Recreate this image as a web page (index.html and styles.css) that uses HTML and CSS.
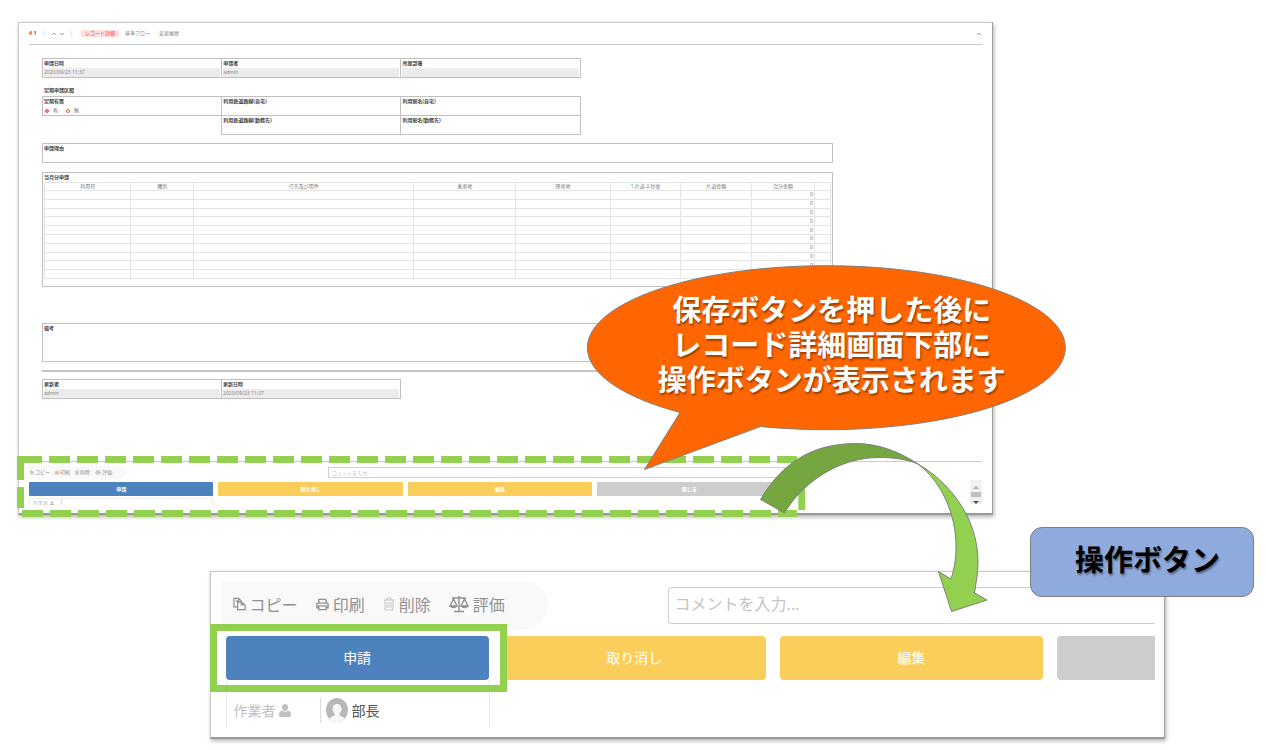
FILE: index.html
```html
<!DOCTYPE html>
<html lang="ja">
<head>
    <meta charset="UTF-8">
    <meta name="viewport" content="width=device-width, initial-scale=1.0">
    <title>操作ボタン</title>
    <link rel="stylesheet" href="styles.css">
</head>
<body>
    <svg class="sprite" aria-hidden="true">
        <symbol id="icon-copy" viewBox="0 0 14 14">
            <path d="M5 10H1V1h5l3 3v1M6 1v3H3M5 5h4l4 3v5H5zM9 5v3h4" fill="none" stroke="currentColor" stroke-width="1.3"/>
        </symbol>
        <symbol id="icon-print" viewBox="0 0 14 14">
            <path d="M3 6V2h7l1 1v3M3 11H1V7q0-1 1-1h10q1 0 1 1v4h-2M3 9h8v4H3z" fill="none" stroke="currentColor" stroke-width="1.5"/>
        </symbol>
        <symbol id="icon-trash" viewBox="0 0 12 14">
            <path d="M1 3h10M4 3V1h4v2M2 3v10h8V3M4 5v6M6 5v6M8 5v6" fill="none" stroke="currentColor"/>
        </symbol>
        <symbol id="icon-scale" viewBox="0 0 20 18">
            <path d="M3 3h14M10 1v15M5 16.500h10M4.500 4L1 11h7zM15.500 4L12 11h7zM1 11q3.500 3 7 0M12 11q3.500 3 7 0" fill="none" stroke="currentColor" stroke-width="1.400"/>
        </symbol>
        <symbol id="icon-user" viewBox="0 0 12 13">
            <path d="M6 0a3 3 0 0 1 3 3.500C9 5.500 7.700 7 6 7S3 5.500 3 3.500A3 3 0 0 1 6 0zM3 6.500c2 1.600 4 1.600 6 0 2 .3 3 2 3 4.500 0 1.300-.8 2-2 2H2c-1.200 0-2-.7-2-2 0-2.500 1-4.200 3-4.500z" fill="currentColor"/>
        </symbol>
    </svg>

    <main class="stage">
        <section class="panel record">
            <header class="record-header">
                <span class="record-no"><b>#</b> 1</span>
                <span>|</span>
                <svg class="chevrons" viewBox="0 0 13 4"><path d="M1 3l2-2 2 2M9 1l2 2 2-2" fill="none" stroke="currentColor"/></svg>
                <span>|</span>
                <nav class="tabs">
                    <a href="#" class="active">レコード詳細</a>
                    <a href="#">基準フロー</a>
                    <a href="#">変更履歴</a>
                </nav>
                <svg class="collapse" viewBox="0 0 5 4"><path d="M0 3l2-2 2 2" fill="none" stroke="currentColor"/></svg>
            </header>

            <form class="form">
                <div class="fields three">
                    <div class="field"><b>申請日時</b><span class="readonly">2020/09/23 11:37</span></div>
                    <div class="field"><b>申請者</b><span class="readonly">admin</span></div>
                    <div class="field"><b>所属部署</b><span class="readonly"></span></div>
                </div>

                <h2 class="group-title">定期申請区間</h2>
                <div class="fields three">
                    <div class="field">
                        <b>定期有無</b>
                        <span class="radios">
                            <label><input type="radio" name="pass" checked> 有</label>
                            <label><input type="radio" name="pass"> 無</label>
                        </span>
                    </div>
                    <div class="field"><label for="line1">利用鉄道路線(自宅)</label><input id="line1" type="text"></div>
                    <div class="field"><label for="station1">利用駅名(自宅)</label><input id="station1" type="text"></div>
                    <div class="field second"><label for="line2">利用鉄道路線(勤務先)</label><input id="line2" type="text"></div>
                    <div class="field"><label for="station2">利用駅名(勤務先)</label><input id="station2" type="text"></div>
                </div>

                <div class="box reason"><label for="reason">申請理由</label><textarea id="reason"></textarea></div>

                <div class="box monthly">
                    <b>当月分申請</b>
                    <table>
                        <colgroup>
                            <col class="c-date"><col class="c-kind"><col class="c-place"><col class="c-from"><col class="c-to">
                            <col class="c-fare"><col class="c-fare"><col class="c-sum"><col class="c-end">
                        </colgroup>
                        <thead>
                            <tr><th>利用日</th><th>種別</th><th>行先及び用件</th><th>乗車地</th><th>降車地</th><th>1.片道 2.往復</th><th>片道金額</th><th>合計金額</th><th></th></tr>
                        </thead>
                        <tbody>
                            <tr><td></td><td></td><td></td><td></td><td></td><td></td><td></td><td>0</td><td></td></tr>
                            <tr><td></td><td></td><td></td><td></td><td></td><td></td><td></td><td>0</td><td></td></tr>
                            <tr><td></td><td></td><td></td><td></td><td></td><td></td><td></td><td>0</td><td></td></tr>
                            <tr><td></td><td></td><td></td><td></td><td></td><td></td><td></td><td>0</td><td></td></tr>
                            <tr><td></td><td></td><td></td><td></td><td></td><td></td><td></td><td>0</td><td></td></tr>
                            <tr><td></td><td></td><td></td><td></td><td></td><td></td><td></td><td>0</td><td></td></tr>
                            <tr><td></td><td></td><td></td><td></td><td></td><td></td><td></td><td>0</td><td></td></tr>
                            <tr><td></td><td></td><td></td><td></td><td></td><td></td><td></td><td>0</td><td></td></tr>
                            <tr><td></td><td></td><td></td><td></td><td></td><td></td><td></td><td>0</td><td></td></tr>
                            <tr><td></td><td></td><td></td><td></td><td></td><td></td><td></td><td>0</td><td></td></tr>
                        </tbody>
                    </table>
                </div>

                <div class="box note"><label for="note">備考</label><textarea id="note"></textarea></div>
                <hr>
                <div class="fields two">
                    <div class="field"><b>更新者</b><span class="readonly">admin</span></div>
                    <div class="field"><b>更新日時</b><span class="readonly">2020/09/23 11:37</span></div>
                </div>
            </form>

            <footer class="record-footer">
                <div class="bar">
                    <div class="tools">
                        <a href="#"><svg><use href="#icon-copy"/></svg>コピー</a>
                        <a href="#"><svg><use href="#icon-print"/></svg>印刷</a>
                        <a href="#"><svg><use href="#icon-trash"/></svg>削除</a>
                        <a href="#"><svg class="scale"><use href="#icon-scale"/></svg>評価</a>
                    </div>
                    <input class="comment" type="text" placeholder="コメントを入力..." aria-label="コメント">
                </div>
                <div class="actions">
                    <button type="button" class="apply">申請</button>
                    <button type="button" class="warn">取り消し</button>
                    <button type="button" class="warn">編集</button>
                    <button type="button" class="close">閉じる</button>
                </div>
                <div class="worker-cut">作業者 <svg><use href="#icon-user"/></svg><i></i></div>
                <div class="scroller">
                    <svg viewBox="0 0 12 24"><path d="M3 9l3-3 3 3z" fill="#aaa"/><path d="M1 12h10v5H1z" fill="#c1c1c1"/><path d="M3 21h6l-3 3z" fill="#505050"/></svg>
                </div>
                <svg class="dashes">
                    <line x1="0" y1="3.500" x2="25" y2="3.500"/>
                    <line x1="32" y1="3.500" x2="99%" y2="3.500" stroke-dasharray="21 7"/>
                    <line x1="5" y1="57.500" x2="99%" y2="57.500" stroke-dasharray="21 7"/>
                    <line x1="3.500" y1="2" x2="3.500" y2="52" stroke-dasharray="22 7"/>
                    <line x1="100%" y1="5" x2="100%" y2="54" stroke-dasharray="21 7" class="right"/>
                </svg>
            </footer>
        </section>

        <section class="panel detail">
            <div class="bar">
                <div class="tools">
                    <a href="#"><svg><use href="#icon-copy"/></svg>コピー</a>
                    <a href="#"><svg><use href="#icon-print"/></svg>印刷</a>
                    <a href="#"><svg class="trash"><use href="#icon-trash"/></svg>削除</a>
                    <a href="#"><svg class="scale"><use href="#icon-scale"/></svg>評価</a>
                </div>
                <input class="comment" type="text" placeholder="コメントを入力..." aria-label="コメント">
            </div>
            <div class="actions">
                <div class="framed"><button type="button" class="apply">申請</button></div>
                <button type="button" class="warn">取り消し</button>
                <button type="button" class="warn">編集</button>
                <button type="button" class="close" aria-label="閉じる"></button>
            </div>
            <div class="worker">
                <span class="worker-label">作業者 <svg><use href="#icon-user"/></svg></span>
                <span class="worker-name">
                    <svg viewBox="0 0 22 24"><ellipse cx="11" cy="12" rx="11" ry="12" fill="#b8b8b8"/><path d="M11 6c3 0 4.500 2 4.500 5 0 2-1 3.500-2 4.500v2c2 .5 4 1.500 5 3-4 4.500-11 4.500-15 0 1-1.500 3-2.500 5-3v-2c-1-1-2-2.500-2-4.500 0-3 1.500-5 4.500-5z" fill="#f7f7f7"/></svg>
                    部長
                </span>
            </div>
        </section>

        <div class="callout">
            <svg viewBox="0 0 482 208"><path d="M93 148.500A239 82 0 1 1 173.500 162.500L57.500 205.500z"/></svg>
            <p>保存ボタンを押した後に<br>レコード詳細画面下部に<br>操作ボタンが表示されます</p>
        </div>

        <svg class="arrow" viewBox="0 0 230 172">
            <path class="light" d="M159 23C187 39 219 74 219 121C219 132 217 142 215.500 152L228 159L192.500 170.500L179.500 130.500L192 138C196 126 197 115 197 105C197 74 183 41 159 23z"/>
            <path class="dark" d="M1.500 58.500C25 18 58 2.500 97 2.500C122 2.500 144 13 159 23C147 18 134 16.500 120 16.500C80 16.500 44 41 25.500 72z"/>
        </svg>

        <div class="badge">操作ボタン</div>
    </main>
</body>
</html>
```

FILE: styles.css
```css
* {
    box-sizing: border-box;
}
body {
    margin: 0;
    background-color: #fff;
    color: #555;
    font-family: "Noto Sans", "Noto Sans CJK JP", sans-serif;
}
button,
input,
textarea {
    font: inherit;
    color: inherit;
    margin: 0;
    padding: 0;
    border: 0;
    background: none;
    min-width: 0;
}
a {
    color: inherit;
    text-decoration: none;
}
.sprite {
    position: absolute;
    width: 0;
    height: 0;
}
.stage {
    position: relative;
    padding: 22px 0 11px 18px;
}
.panel {
    background-color: #fff;
    border: 1px solid #c8c8c8;
    border-right-color: #a0a0a0;
    border-bottom: 2px solid #999;
    box-shadow: 1px 2px 4px rgba(0, 0, 0, 0.3);
}

/* record screen */
.record {
    width: 76.800%;
    padding: 0 10px 8px;
    font-size: 5px;
    line-height: 9px;
}
.record-header {
    display: flex;
    align-items: center;
    gap: 6px;
    height: 22px;
    border-bottom: 1px solid #ccc;
    color: #aaa;
}
.record-no {
    color: #555;
    font-weight: bold;
}
.record-no b {
    color: #f0544f;
}
.chevrons {
    width: 13px;
    height: 4px;
}
.tabs {
    display: flex;
    gap: 3px;
    margin-left: 2px;
    color: #888;
}
.tabs a {
    line-height: 7px;
    padding: 0 3px;
}
.tabs .active {
    background-color: #fddfdd;
    color: #f0544f;
    padding: 0 4px;
}
.collapse {
    width: 5px;
    height: 4px;
    margin-left: auto;
}
.form {
    width: 83%;
    margin: 13px 0 0 13px;
}
.fields {
    display: grid;
}
.three {
    width: 68%;
    grid-template-columns: repeat(3, 1fr);
}
.two {
    width: 45.300%;
    grid-template-columns: repeat(2, 1fr);
}
.field {
    display: flex;
    flex-direction: column;
    height: 20px;
    margin: 0 -1px -1px 0;
    padding: 0 1px;
    border: 1px solid #c0c0c0;
}
.field b,
.field > label,
.box b,
.box label {
    color: #444;
    font-weight: bold;
}
.field input[type="text"] {
    height: 9px;
}
.second {
    grid-column-start: 2;
}
.readonly {
    height: 9px;
    background-color: #ececec;
    color: #888;
}
.radios {
    display: flex;
    gap: 8px;
    padding-left: 1px;
}
.radios label {
    display: flex;
    align-items: center;
    gap: 4px;
}
.radios input {
    appearance: none;
    width: 4px;
    height: 4px;
    border: 1px solid #f0544f;
    border-radius: 50%;
}
.radios input:checked {
    background-color: #f58b87;
}
.group-title {
    margin: 9px 0 1px 2px;
    font-size: 5px;
    line-height: 9px;
    color: #444;
}
.box {
    display: flex;
    flex-direction: column;
    padding: 0 1px;
    border: 1px solid #c0c0c0;
}
.box textarea {
    flex: 1;
    width: 100%;
    min-height: 0;
    resize: none;
}
.reason {
    height: 20px;
    margin-top: 9px;
}
.monthly {
    height: 115px;
    margin-top: 9px;
}
.note {
    height: 39px;
    margin-top: 36px;
}
.form hr {
    height: 2px;
    margin: 8px 0 7px;
    border: 0;
    background-color: #c4c4c4;
}
.monthly table {
    width: 100%;
    height: 97px;
    table-layout: fixed;
    border-collapse: collapse;
    line-height: 7px;
}
.monthly th,
.monthly td {
    padding: 0;
    border: 1px solid #e4e4e4;
    font-weight: normal;
    color: #777;
}
.monthly td {
    padding-right: 1px;
    text-align: right;
}
.c-date { width: 11%; }
.c-kind { width: 8%; }
.c-place { width: 28%; }
.c-from { width: 13%; }
.c-to { width: 12%; }
.c-fare { width: 9%; }
.c-sum { width: 8%; }
.c-end { width: 2%; }

/* tool bar and operation buttons */
.bar {
    display: flex;
    align-items: center;
}
.tools {
    display: flex;
    align-items: center;
    background-color: #f9f9f9;
    color: #909090;
}
.tools a {
    display: flex;
    align-items: center;
}
.comment {
    border: 1px solid #d0d0d0;
}
.comment::placeholder {
    color: #c4c4c4;
    opacity: 1;
}
.actions {
    display: grid;
}
.actions button {
    width: 100%;
    color: #fff;
}
.actions .apply {
    background-color: #4d82be;
}
.actions .warn {
    background-color: #fbce5b;
}
.actions .close {
    background-color: #cdcdcd;
}

.record-footer {
    position: relative;
    margin-top: 63px;
    padding-top: 4px;
    border-top: 1px solid #ccc;
}
.record-footer .tools {
    gap: 5px;
    width: 97px;
    height: 13px;
    padding-left: 1px;
    border-radius: 0 7px 7px 0;
}
.record-footer .tools a {
    gap: 1px;
}
.record-footer .tools svg {
    width: 4px;
    height: 5px;
}
.record-footer .tools .scale {
    width: 6px;
}
.record-footer .comment {
    width: 48%;
    height: 11px;
    margin-left: 202px;
    padding-left: 3px;
}
.record-footer .actions {
    width: 79%;
    grid-template-columns: repeat(4, 1fr);
    gap: 5px;
    margin-top: 3px;
}
.record-footer button {
    height: 14px;
    font-weight: bold;
    border-radius: 1px;
}
.worker-cut {
    display: flex;
    gap: 2px;
    width: 184px;
    height: 7px;
    margin-top: 2px;
    padding-left: 3px;
    overflow: hidden;
    border: 1px solid #eee;
    border-bottom: 0;
    color: #bbb;
}
.worker-cut svg {
    width: 4px;
    height: 5px;
    margin-top: 2px;
}
.worker-cut i {
    margin-left: 5px;
    border-left: 1px solid #ddd;
}
.scroller {
    position: absolute;
    right: 0;
    top: 18px;
    width: 12px;
    height: 24px;
    background-color: #f1f1f1;
}
.scroller svg {
    display: block;
}
.dashes {
    position: absolute;
    left: -12px;
    top: -6px;
    width: 82.700%;
    height: 61px;
    overflow: visible;
}
.dashes line {
    stroke: #92d050;
    stroke-width: 7px;
}
.dashes .right {
    transform: translateX(-3px);
}

/* enlarged operation area */
.detail {
    width: 75.300%;
    margin: 56px 0 0 15.100%;
    padding: 9px 9px 10px 10px;
    font-size: 14px;
}
.detail .tools {
    gap: 18px;
    width: 327px;
    height: 48px;
    padding-left: 12px;
    border-radius: 0 24px 24px 0;
    font-size: 16px;
}
.detail .tools a {
    gap: 4px;
    padding-bottom: 2px;
}
.detail .tools svg {
    width: 13px;
    height: 14px;
}
.detail .tools .trash {
    width: 12px;
    color: #c4c4c4;
}
.detail .tools .scale {
    width: 20px;
    height: 18px;
}
.detail .comment {
    flex: 1;
    height: 37px;
    margin-left: 120px;
    padding: 0 0 2px 6px;
    border-right: 0;
    border-radius: 4px 0 0 4px;
    font-size: 16px;
}
.detail .actions {
    grid-template-columns: repeat(3, 28.300%) 1fr;
    column-gap: 14px;
    margin: 7px 0 0 5px;
}
.detail button {
    display: block;
    height: 44px;
    padding-bottom: 3px;
    border-radius: 4px;
}
.detail .close {
    border-radius: 4px 0 0 4px;
}
.framed {
    position: relative;
}
.framed::after {
    content: "";
    position: absolute;
    inset: -12px -18px -12px -16px;
    border: 7px solid #92d050;
}
.worker {
    display: flex;
    width: 264px;
    margin-left: 5px;
    padding: 18px 0 4px 7px;
    border: 1px solid #e8e8e8;
    border-width: 0 1px;
    line-height: 25px;
}
.worker-label {
    width: 87px;
    border-right: 1px solid #ddd;
    color: #c0c0c0;
}
.worker-label svg {
    width: 12px;
    height: 13px;
    vertical-align: -1px;
}
.worker-name {
    display: flex;
    gap: 4px;
    padding-left: 5px;
}
.worker-name svg {
    width: 22px;
    height: 24px;
}

/* annotations over the screens */
.callout {
    position: absolute;
    left: 45.600%;
    top: 264px;
    width: 482px;
}
.callout svg {
    display: block;
}
.callout path {
    fill: #f60;
    stroke: #7f7f7f;
}
.callout p {
    position: absolute;
    inset: 27px 0 auto 8px;
    margin: 0;
    color: #fff;
    font-family: "Noto Sans CJK JP", sans-serif;
    font-size: 29px;
    font-weight: bold;
    line-height: 35px;
    text-align: center;
    white-space: nowrap;
    text-shadow: 1px 2px 2px rgba(0, 0, 0, 0.4);
}
.arrow {
    position: absolute;
    left: 59%;
    top: 441px;
    width: 230px;
}
.arrow path {
    stroke: #7f7f7f;
}
.light {
    fill: #92d050;
}
.dark {
    fill: #75a640;
}
.badge {
    position: absolute;
    left: 80%;
    top: 527px;
    width: 224px;
    height: 70px;
    padding-left: 12px;
    background-color: #8faadc;
    border: 1px solid #7f7f7f;
    border-radius: 12px;
    color: #000;
    font-family: "Noto Sans CJK JP", sans-serif;
    font-size: 29px;
    font-weight: bold;
    line-height: 60px;
    text-align: center;
    text-shadow: 1px 2px 2px rgba(0, 0, 0, 0.4);
}
```
